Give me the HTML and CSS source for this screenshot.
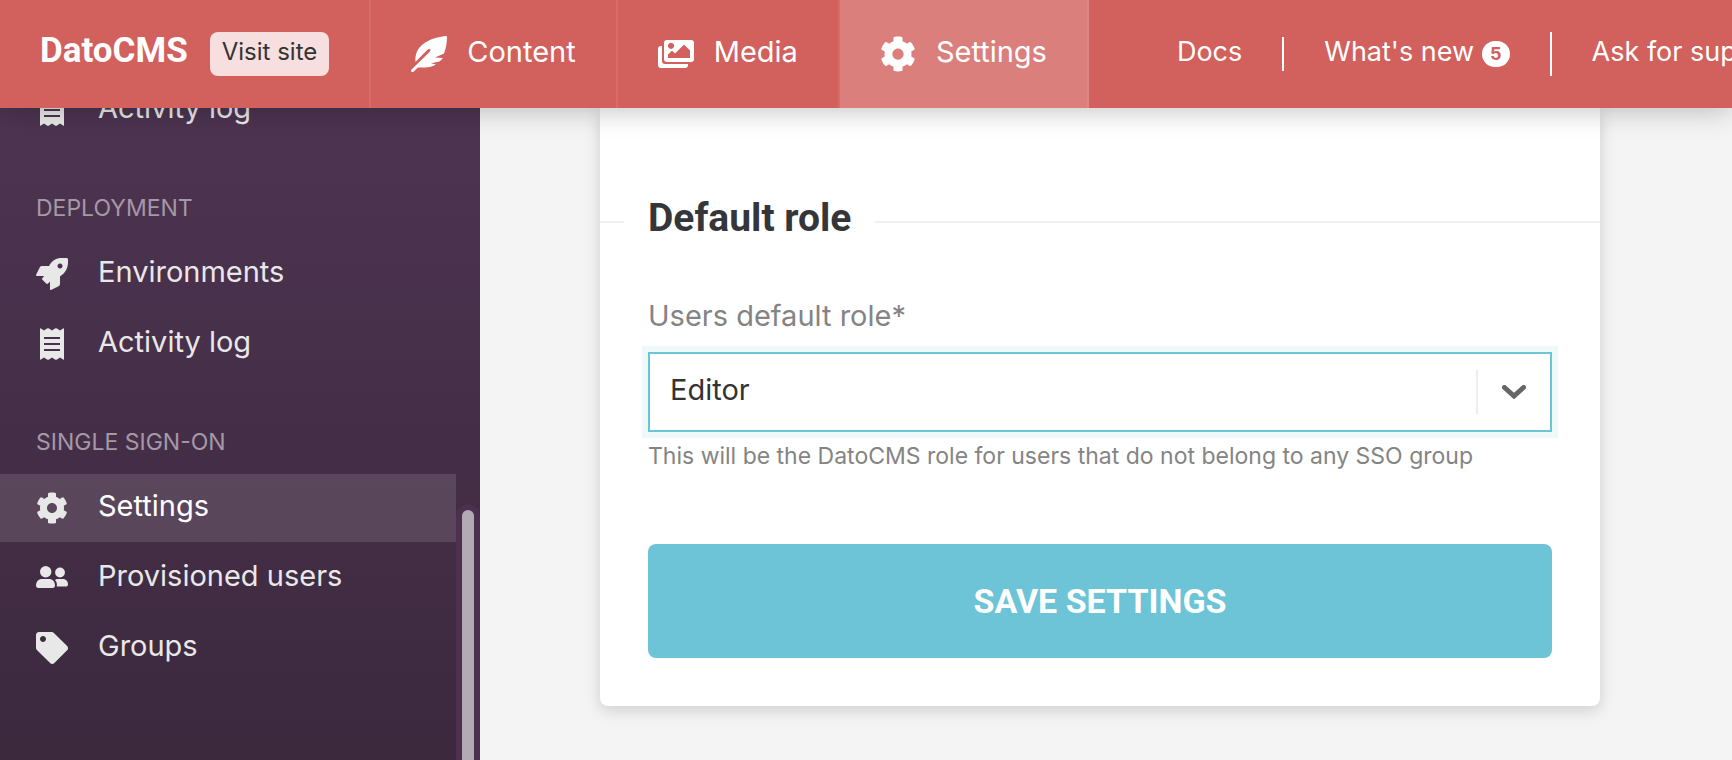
FILE: index.html
```html
<!DOCTYPE html>
<html lang="en">
<head>
<meta charset="utf-8">
<title>Single sign-on settings - DatoCMS</title>
<link rel="stylesheet" href="styles.css">
</head>
<body>
<svg class="sprite" aria-hidden="true">
  <symbol id="gear" viewBox="0 0 512 512"><path d="M487.4 315.7l-42.6-24.6c4.3-23.2 4.3-47 0-70.2l42.6-24.6c4.9-2.8 7.1-8.6 5.5-14-11.1-35.6-30-67.8-54.7-94.6-3.8-4.1-10-5.1-14.8-2.3L380.8 110c-17.9-15.4-38.5-27.3-60.8-35.1V25.8c0-5.6-3.9-10.5-9.4-11.7-36.7-8.2-74.3-7.8-109.2 0-5.5 1.2-9.4 6.1-9.4 11.7V75c-22.2 7.9-42.8 19.8-60.8 35.1L88.7 85.5c-4.9-2.8-11-1.9-14.8 2.3-24.7 26.7-43.6 58.9-54.7 94.6-1.7 5.4.6 11.2 5.5 14L67.3 221c-4.3 23.2-4.3 47 0 70.2l-42.6 24.6c-4.9 2.8-7.1 8.6-5.5 14 11.1 35.6 30 67.8 54.7 94.6 3.8 4.1 10 5.1 14.8 2.3l42.6-24.6c17.9 15.4 38.5 27.3 60.8 35.1v49.2c0 5.6 3.9 10.5 9.4 11.7 36.7 8.2 74.3 7.8 109.2 0 5.5-1.2 9.4-6.1 9.4-11.7v-49.2c22.2-7.9 42.8-19.8 60.8-35.1l42.6 24.6c4.9 2.8 11 1.9 14.8-2.3 24.7-26.7 43.6-58.9 54.7-94.6 1.5-5.5-.7-11.3-5.6-14.1zM256 336c-44.1 0-80-35.9-80-80s35.9-80 80-80 80 35.9 80 80-35.9 80-80 80z"/></symbol>
  <symbol id="receipt" viewBox="0 0 32 32"><path fill-rule="evenodd" d="M4 .6Q4 0 4.800.5L8 2.500l3-2q1-.6 2 0L16 2.500l3-2q1-.6 2 0L24 2.500l3.200-2Q28 0 28 .6V31.400q0 .6-.8.1L24 29.500l-3 2q-1 .6-2 0L16 29.500l-3 2q-1 .6-2 0L8 29.500l-3.200 2Q4 32 4 31.400zM8 9v2h16V9zm0 6v2h16v-2zm0 6v2h16v-2z"/></symbol>
  <symbol id="rocket" viewBox="0 0 32 32"><path fill-rule="evenodd" d="M13 8C16 2.600 20 0 26 0h4.500q1.400 0 1.500 1.400C32.400 9 30.500 14 24 18.500V26q0 1.500-1.400 2.300L15.500 31.800Q14 32.400 14 31v-7.200l-2.300 1.900q-.8.6-1.500-.1L6.400 21.800q-.7-.7-.1-1.500L8.200 18H1Q-.4 18 .2 16.500L3.700 9.400Q4.500 8 6 8zM24 5.500a2.500 2.500 0 1 0 .01 0z"/></symbol>
  <symbol id="users" viewBox="0 0 32 32"><circle cx="9.700" cy="9.800" r="5.700"/><circle cx="24" cy="10.500" r="4.900"/><path d="M6 17h7c3.500 0 6 2.700 6 6.500 0 1.600-.9 2.500-2.400 2.500H2.400C.9 26 0 25.100 0 23.500 0 19.700 2.500 17 6 17z"/><path d="M19 18c.7-.6 1.500-1 2.500-1h5.300c3 0 5.200 2.200 5.200 5.200 0 1.500-.9 2.300-2.300 2.300h-9c.6-2.500 0-4.800-1.700-6.500z"/></symbol>
  <symbol id="tag" viewBox="0 0 512 512"><path d="M0 252.118V48C0 21.490 21.490 0 48 0h204.118a48 48 0 0 1 33.941 14.059l211.882 211.882c18.744 18.745 18.744 49.136 0 67.882L293.823 497.941c-18.745 18.744-49.137 18.744-67.882 0L14.059 286.059A48 48 0 0 1 0 252.118zM112 64c-26.510 0-48 21.490-48 48s21.490 48 48 48 48-21.490 48-48-21.490-48-48-48z"/></symbol>
  <symbol id="feather" viewBox="0 0 36 36"><path d="M35.200 0C22 1.200 8 7 5 18.500c-.8 3-.8 5.500-.4 7.300L16 14.300c1.200-1.200 2.200-1.600 3-1 .8.700.5 1.600-.5 2.600L.6 33.500c-.8.9-.7 1.600 0 2.200.8.600 1.600.4 2.400-.4l3.800-3.900c6.700.1 13.500.4 18.200-3L20 27.300l8.500-1.700c1.500-1.200 2.600-2.300 3.400-3.600L24 21.500l9-4C35 12.500 36 6 36 .8q0-.8-.8-.8z"/></symbol>
  <symbol id="images" viewBox="0 0 36 28"><path d="M4 6v15q0 3 3 3h23v1q0 3-3 3H3q-3 0-3-3V9q0-3 3-3z"/><path fill-rule="evenodd" d="M9 0h24q3 0 3 3v16q0 3-3 3H9q-3 0-3-3V3q0-3 3-3zm4 2.700a3.100 3.100 0 1 0 .01 0zM10 18h22v-7.500L26.700 5.200q-.7-.6-1.400 0L17 13.500l-2.300-2.300q-.7-.6-1.400 0L10 14.500z"/></symbol>
</svg>

<header class="topbar">
  <div class="brand">
    <strong class="brand-name">DatoCMS</strong>
    <a class="visit" href="#">Visit site</a>
  </div>
  <nav class="tabs" aria-label="Main">
    <a class="tab" href="#"><svg class="icon-lg"><use href="#feather"/></svg><span class="label">Content</span></a>
    <a class="tab" href="#"><svg class="icon-lg"><use href="#images"/></svg><span class="label">Media</span></a>
    <a class="tab tab-active" href="#" aria-current="page"><svg class="icon-lg"><use href="#gear"/></svg><span class="label">Settings</span></a>
  </nav>
  <nav class="help" aria-label="Help">
    <a class="help-link" href="#"><span class="label">Docs</span></a>
    <span class="rule rule-short"></span>
    <a class="help-link" href="#"><span class="label">What's new</span><span class="count">5</span></a>
    <span class="rule"></span>
    <a class="help-link" href="#"><span class="label">Ask for support</span></a>
  </nav>
</header>

<div class="layout">
  <aside class="sidebar">
    <nav class="menu" aria-label="Settings">
      <ul class="menu-list menu-list-scrolled">
        <li><a class="item" href="#"><svg class="icon"><use href="#receipt"/></svg><span class="label">Activity log</span></a></li>
      </ul>
      <h2 class="menu-title">DEPLOYMENT</h2>
      <ul class="menu-list">
        <li><a class="item" href="#"><svg class="icon"><use href="#rocket"/></svg><span class="label">Environments</span></a></li>
        <li><a class="item" href="#"><svg class="icon"><use href="#receipt"/></svg><span class="label">Activity log</span></a></li>
      </ul>
      <h2 class="menu-title">SINGLE SIGN-ON</h2>
      <ul class="menu-list">
        <li><a class="item item-active" href="#" aria-current="page"><svg class="icon"><use href="#gear"/></svg><span class="label">Settings</span></a></li>
        <li><a class="item" href="#"><svg class="icon"><use href="#users"/></svg><span class="label">Provisioned users</span></a></li>
        <li><a class="item" href="#"><svg class="icon"><use href="#tag"/></svg><span class="label">Groups</span></a></li>
      </ul>
    </nav>
    <div class="scroll"><div class="scroll-track"><div class="scroll-thumb"></div></div></div>
  </aside>

  <main class="main">
    <form class="card">
      <div class="section-head"><h1 class="section-title">Default role</h1></div>
      <div class="fields">
        <label class="field-label" for="role">Users default role*</label>
        <div class="select">
          <select id="role" class="select-input" aria-describedby="role-hint">
            <option>Editor</option>
          </select>
          <span class="select-arrow"><svg class="chevron" viewBox="0 0 24 14"><path d="M2.500 2.500 12 11l9.500-8.500"/></svg></span>
        </div>
        <p class="hint" id="role-hint">This will be the DatoCMS role for users that do not belong to any SSO group</p>
        <button class="save" type="button">SAVE SETTINGS</button>
      </div>
    </form>
  </main>
</div>
</body>
</html>
```
FILE: styles.css
```css
* {
  box-sizing: border-box;
}

body {
  display: flex;
  flex-direction: column;
  height: 100vh;
  margin: 0;
  overflow: hidden;
  background: #f4f4f4;
  color: #333;
  font-family: Inter, "Liberation Sans", sans-serif;
  font-size: 29px;
  line-height: 36px;
}

a {
  color: inherit;
  text-decoration: none;
}

.sprite {
  display: none;
}

.label {
  padding-bottom: 4px;
  white-space: nowrap;
}

/* Top bar */

.topbar {
  position: relative;
  z-index: 1;
  display: flex;
  flex: none;
  height: 108px;
  background: #d2605d;
  box-shadow: 0 0 28px rgba(0, 0, 0, 0.28);
  color: #fff;
}

.brand {
  display: flex;
  flex: none;
  align-items: center;
  gap: 22px;
  padding: 0 40px;
  border-right: 2px solid #d66d6a;
}

.brand-name {
  padding-bottom: 6px;
  font-family: Roboto, sans-serif;
  font-size: 35px;
}

.visit {
  padding: 2px 12px 6px;
  border-radius: 8px;
  background: #f7dfdf;
  color: #333;
  font-size: 24px;
}

.tabs {
  display: flex;
  flex: none;
}

.tab {
  display: flex;
  align-items: center;
  gap: 20px;
  padding: 0 40px;
  border-right: 2px solid #d66d6a;
}

.tab-active {
  border-color: #df8986;
  background: #db7f7c;
}

.icon-lg {
  width: 36px;
  height: 36px;
  fill: currentColor;
}

.help {
  display: flex;
  flex: 1;
  align-items: center;
  gap: 40px;
  min-width: 0;
  padding-left: 88px;
  overflow: hidden;
  font-size: 27px;
}

.help-link {
  display: flex;
  flex: none;
  align-items: center;
  gap: 8px;
}

.rule {
  flex: none;
  width: 2px;
  height: 44px;
  background: #fff;
}

.rule-short {
  height: 34px;
}

.count {
  padding: 0 8px;
  border-radius: 13px;
  background: #fff;
  color: #d2605d;
  font-size: 18px;
  font-weight: 700;
  line-height: 26px;
}

/* Sidebar */

.layout {
  display: flex;
  flex: 1;
  min-height: 0;
}

.sidebar {
  display: flex;
  flex: none;
  width: 480px;
  overflow: hidden;
  background: linear-gradient(#4d3451, #3c293e);
  color: #e8e8e8;
}

.menu {
  flex: 1;
}

.menu-list {
  display: grid;
  gap: 2px;
  margin: 0;
  padding: 0;
  list-style: none;
}

.menu-list-scrolled {
  margin-top: -32px;
}

.item {
  display: flex;
  align-items: center;
  gap: 30px;
  height: 68px;
  padding: 0 36px;
}

.item-active {
  background: rgba(255, 255, 255, 0.12);
  color: #fff;
}

.icon {
  width: 32px;
  height: 32px;
  fill: #e8e8e8;
}

.menu-title {
  margin: 0;
  padding: 46px 36px 14px;
  color: #a598a7;
  font-size: 23px;
  font-weight: 400;
}

.scroll {
  display: flex;
  width: 24px;
  padding-top: 396px;
}

.scroll-track {
  flex: 1;
  padding: 6px 6px 0;
  border-radius: 12px 12px 0 0;
  background: #4b314d;
}

.scroll-thumb {
  height: 100%;
  border-radius: 6px 6px 0 0;
  background: #b2aab4;
}

/* Settings form */

.main {
  flex: 1;
  min-width: 0;
  padding: 0 132px 54px 120px;
}

.card {
  padding: 86px 0 48px;
  border-radius: 0 0 8px 8px;
  background: #fff;
  box-shadow: 0 4px 16px rgba(0, 0, 0, 0.16);
}

.section-head {
  display: flex;
  align-items: center;
  gap: 24px;
}

.section-head::before,
.section-head::after {
  width: 24px;
  height: 2px;
  background: #f0f0f0;
  content: "";
}

.section-head::after {
  flex: 1;
}

.section-title {
  margin: 0;
  padding-bottom: 8px;
  color: #34363a;
  font-family: Roboto, sans-serif;
  font-size: 39px;
  line-height: 48px;
}

.fields {
  display: flex;
  flex-direction: column;
  padding: 48px 48px 0;
}

.field-label {
  color: #848484;
  font-size: 29px;
}

.select {
  display: grid;
  grid-template-columns: 1fr 74px;
  align-items: center;
  margin-top: 18px;
  border: 2px solid #6dc4d6;
  box-shadow: 0 0 0 6px #eff9fc;
}

.select-input {
  grid-area: 1 / 1 / 2 / 3;
  height: 76px;
  padding: 0 96px 4px 20px;
  border: 0;
  outline: 0;
  appearance: none;
  background: transparent;
  color: #333;
  font: inherit;
}

.select-arrow {
  display: flex;
  grid-area: 1 / 2 / 2 / 3;
  align-items: center;
  justify-content: center;
  height: 44px;
  border-left: 2px solid #eee;
  pointer-events: none;
}

.chevron {
  width: 24px;
  height: 14px;
  fill: none;
  stroke: #666;
  stroke-width: 5;
  stroke-linecap: round;
}

.hint {
  margin: 8px 0 72px;
  color: #848484;
  font-size: 23px;
  line-height: 32px;
}

.save {
  height: 114px;
  border: 0;
  border-radius: 8px;
  background: #6dc4d6;
  color: #fff;
  font-family: Roboto, sans-serif;
  font-size: 34px;
  font-weight: 700;
}
```
